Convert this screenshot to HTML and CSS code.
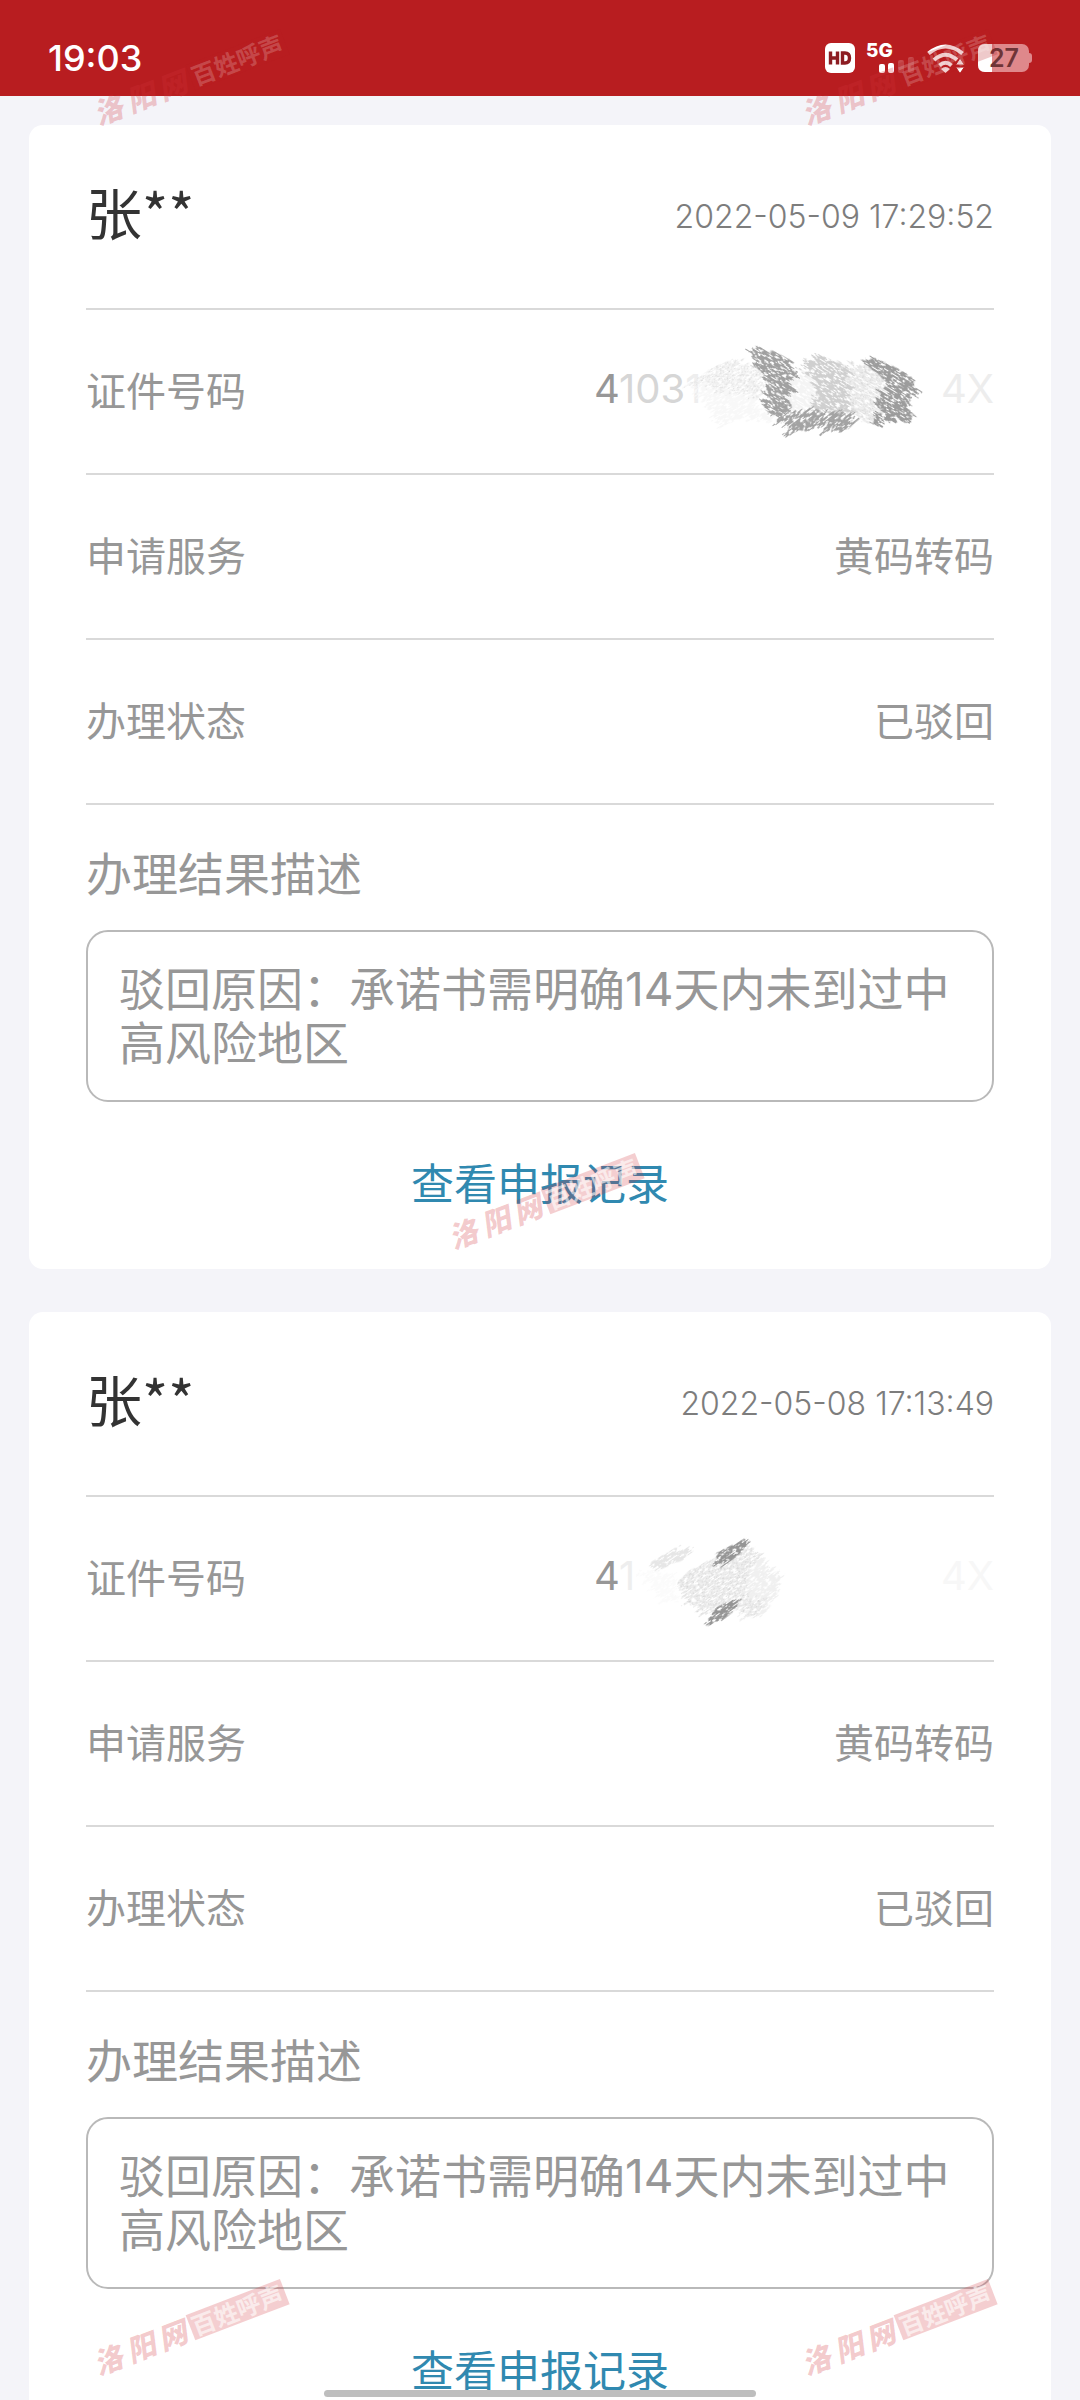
FILE: index.html
```html
<!DOCTYPE html>
<html lang="zh-CN">
<head>
<meta charset="utf-8">
<meta name="viewport" content="width=device-width, initial-scale=1">
<title>申报记录</title>
<link rel="stylesheet" href="styles.css">
</head>
<body>
<svg class="defs" width="0" height="0" aria-hidden="true">
  <defs>
    <pattern id="specks" width="17" height="13" patternUnits="userSpaceOnUse" patternTransform="rotate(-35)">
      <path d="M1 2h5M9 5h4M3 10h3M13 11h3" stroke="#b4b4b4" stroke-width="2"/>
    </pattern>
    <filter id="brush" x="-10%" y="-10%" width="120%" height="120%" color-interpolation-filters="sRGB">
      <feTurbulence type="fractalNoise" baseFrequency="0.008 0.11" numOctaves="2" seed="4"/>
      <feColorMatrix values="1 0 0 0 0  0 0 0 0 .5  0 0 0 0 .5  0 0 0 0 1" result="shift"/>
      <feDisplacementMap in="SourceGraphic" in2="shift" scale="90" xChannelSelector="R" yChannelSelector="G" result="torn"/>
      <feTurbulence type="fractalNoise" baseFrequency="0.06 0.22" numOctaves="2" seed="9"/>
      <feColorMatrix values="0 0 0 0 0  0 0 0 0 0  0 0 0 0 0  -9 0 0 0 5.800" result="holes"/>
      <feComposite in="torn" in2="holes" operator="in"/>
    </filter>
    <symbol id="mark" viewBox="0 0 220 40">
      <g class="mark-script"><text x="12" y="31">洛</text><text x="47" y="31">阳</text><text x="81" y="31">网</text></g>
      <rect class="mark-box" x="115" y="6" width="101" height="27"/>
      <text class="mark-text" x="117" y="29">百姓呼声</text>
    </symbol>
  </defs>
</svg>
<div class="screen">
  <header class="status">
    <time class="clock">19:03</time>
    <div class="icons">
      <svg class="hd" width="30" height="30" viewBox="0 0 30 30" role="img" aria-label="HD"><rect width="30" height="30" rx="6" fill="#fff"/><path d="M5.500 8.500v13M12.500 8.500v13M5.500 15h7" fill="none" stroke="#8c1c22" stroke-width="3.400"/><path d="M17.500 10v10h2.500q4.500 0 4.500-5t-4.500-5z" fill="none" stroke="#8c1c22" stroke-width="3.400"/></svg>
      <svg class="signal" width="50" height="42" viewBox="0 -6 50 42"><text x="0" y="14">5G</text><rect x="13" y="21" width="6" height="9" rx="2" fill="#fff"/><rect x="22" y="20" width="6" height="10" rx="2" fill="#fff"/><g fill="#fff" opacity=".2"><rect x="32" y="17" width="6" height="13" rx="2"/><rect x="42" y="14" width="6" height="16" rx="2"/></g></svg>
      <svg class="wifi" width="40" height="30" viewBox="0 0 40 30"><g fill="none" stroke="#fff" stroke-width="4"><path d="M2.500 10.500Q19.500-3.500 36.500 10.500"/><path d="M8 17Q19.500 6.500 31 17"/><path d="M13.500 22.500Q19.500 17 25.500 22.500"/></g><path d="M15 26q4.500-4 9 0l-4.500 4z" fill="#fff"/><path d="M29.500 22l4.500-7 4.500 7zM29.500 24h9L34 30.500z" fill="#fff" stroke="#b81d20" stroke-width="1"/></svg>
      <svg class="battery" width="54" height="28" viewBox="0 0 54 28"><rect width="51" height="28" rx="7" fill="#df888b"/><path d="M51 9q3 0 3 3v4q0 3-3 3z" fill="#df888b"/><path d="M14 0v28H7q-7 0-7-7V7q0-7 7-7z" fill="#fff"/><text x="11" y="23">27</text></svg>
    </div>
  </header>
  <main class="list">
    <article class="card">
      <header class="head"><h2>张**</h2><time>2022-05-09 17:29:52</time></header>
      <dl class="rows">
        <div class="row"><dt>证件号码</dt><dd class="id"><span>4<span class="faded">103</span><span class="faint">1</span></span><span class="pale">4X</span>
          <svg class="smudge" viewBox="102 0 1200 420" aria-hidden="true">
            <g transform="rotate(-30)" filter="url(#brush)"><g transform="rotate(30)">
              <path d="M385 190L450 145L525 112L560 130L610 150L620 215L590 240L650 310L550 290L480 320L430 240Z" fill="#f8f8f8"/>
              <path d="M385 190L450 145L525 112L610 150L620 215L590 235L520 215L440 200Z" fill="url(#specks)"/>
            </g></g>
            <g transform="rotate(32)" filter="url(#brush)"><g transform="rotate(-32)">
              <path d="M745 110L775 97L860 135L900 180L890 270L850 285L760 275L755 210L720 165Z" fill="#cfcfcf"/>
              <path d="M690 170L750 150L765 210L755 260L700 275L680 245Z" fill="#f4f4f4"/>
              <path d="M870 125L920 130L975 165L970 220L950 290L900 300L865 250Z" fill="#f0f0f0"/>
              <path d="M870 125L920 130L975 165L970 220L950 290L900 300L865 250Z" fill="url(#specks)"/>
              <path d="M585 78L640 90L690 115L705 150L695 190L680 240L690 270L640 285L610 262L600 235L620 205L610 155L575 135Z" fill="#a0a0a0"/>
              <path d="M900 105L950 115L980 125L1060 170L1070 220L1050 240L1040 300L980 305L940 310L915 295L955 280L960 225L975 180L940 150Z" fill="#9c9c9c"/>
            </g></g>
            <g transform="rotate(-38)" filter="url(#brush)"><g transform="rotate(38)">
              <path d="M640 265L690 265L740 280L790 265L850 275L895 295L850 335L760 325L700 335L660 300Z" fill="#a3a3a3"/>
            </g></g>
          </svg></dd></div>
        <div class="row"><dt>申请服务</dt><dd>黄码转码</dd></div>
        <div class="row"><dt>办理状态</dt><dd>已驳回</dd></div>
      </dl>
      <section class="result">
        <h3>办理结果描述</h3>
        <p>驳回原因：承诺书需明确14天内未到过中高风险地区</p>
      </section>
      <a class="more" href="#records">查看申报记录</a>
    </article>
    <article class="card">
      <header class="head"><h2>张**</h2><time>2022-05-08 17:13:49</time></header>
      <dl class="rows">
        <div class="row"><dt>证件号码</dt><dd class="id"><span>4<span class="faint">1</span></span><span class="ghost">4X</span>
          <svg class="smudge" viewBox="102 21 1200 420" aria-hidden="true">
            <g transform="rotate(-35)" filter="url(#brush)"><g transform="rotate(35)">
              <path d="M270 185L340 145L400 140L395 160L290 212Z" fill="#e6e6e6"/>
              <path d="M240 205L290 212L350 215L350 310L280 290Z" fill="#fbfbfb"/>
              <path d="M358 240L400 200L480 165L560 130L605 165L660 220L650 290L600 350L550 350L520 310L450 345L412 325L365 290Z" fill="#f0f0f0"/>
              <path d="M358 240L400 200L480 165L560 130L605 165L560 215L560 290L630 300L585 350L540 330L520 290L450 345L412 325L365 290Z" fill="url(#specks)"/>
              <path d="M470 155L545 118L562 125L545 155L500 190L480 195L466 185Z" fill="#959595"/>
              <path d="M432 378L455 330L530 290L530 325L485 360L468 360Z" fill="#959595"/>
            </g></g>
          </svg></dd></div>
        <div class="row"><dt>申请服务</dt><dd>黄码转码</dd></div>
        <div class="row"><dt>办理状态</dt><dd>已驳回</dd></div>
      </dl>
      <section class="result">
        <h3>办理结果描述</h3>
        <p>驳回原因：承诺书需明确14天内未到过中高风险地区</p>
      </section>
      <a class="more" href="#records">查看申报记录</a>
    </article>
  </main>
  <svg class="mark top start"><use href="#mark"/></svg>
  <svg class="mark top end"><use href="#mark"/></svg>
  <svg class="mark middle"><use href="#mark"/></svg>
  <svg class="mark bottom start"><use href="#mark"/></svg>
  <svg class="mark bottom end"><use href="#mark"/></svg>
  <div class="home-bar"></div>
</div>
</body>
</html>
```
FILE: styles.css
```css
* { box-sizing: border-box; }

body {
  margin: 0;
  background: #f4f4f9;
  color: #979797;
  font-family: Inter, "Noto Sans CJK SC", sans-serif;
  font-size: 40px;
}

h2, h3, p, dl, dd { margin: 0; font-weight: 400; }

.defs { position: absolute; }

.screen {
  position: relative;
  display: flex;
  flex-direction: column;
  height: 100vh;
  overflow: hidden;
}

/* status bar */
.status {
  flex: none;
  display: flex;
  align-items: center;
  justify-content: space-between;
  height: 96px;
  padding: 20px 48px 0;
  background: #b81d20;
  color: #fff;
}
.clock { font-size: 36px; font-weight: 500; }
.icons { display: flex; align-items: center; }
.signal { margin-left: 11px; fill: #fff; font-size: 19px; font-weight: 800; }
.wifi { margin: 0 12px 0 10px; }
.battery { fill: #6e3437; font-size: 25px; font-weight: 600; }

/* record cards */
.list {
  flex: none;
  display: flex;
  flex-direction: column;
  gap: 43px;
  padding: 29px;
}
.card {
  display: flex;
  flex-direction: column;
  padding: 0 57px 56px;
  border-radius: 14px;
  background: #fff;
}
.head {
  display: flex;
  align-items: center;
  justify-content: space-between;
  height: 185px;
  border-bottom: 2px solid #d9d9d9;
}
.head h2 {
  padding-bottom: 12px;
  color: #333;
  font-family: "Noto Sans CJK SC", sans-serif;
  font-size: 56px;
}
.head time { font-size: 32px; font-weight: 300; color: #7d7d7d; }
.row {
  display: flex;
  align-items: center;
  justify-content: space-between;
  height: 165px;
  padding-bottom: 6px;
  border-bottom: 2px solid #d9d9d9;
}
.id {
  position: relative;
  display: flex;
  justify-content: space-between;
  width: 400px;
}
.faded { color: #d6d6d6; }
.pale { color: #ededed; }
.faint { color: #eee; }
.ghost { color: #f7f7f7; }
.smudge {
  position: absolute;
  left: 0;
  top: 50%;
  width: 400px;
  height: 140px;
  margin-top: -68px;
}
.result h3 {
  padding: 39px 0 26px;
  font-size: 46px;
  line-height: 60px;
}
.result p {
  padding: 30px 31px;
  border: 2px solid #b9b9b9;
  border-radius: 22px;
  font-size: 46px;
  line-height: 54px;
}
.more {
  align-self: center;
  margin-top: 53px;
  color: #3089b0;
  font-size: 43px;
  line-height: 58px;
  text-decoration: none;
}

/* watermarks laid over the page */
.mark {
  position: absolute;
  width: 220px;
  height: 40px;
  transform: rotate(-21deg);
  pointer-events: none;
}
.mark.start { left: 76px; }
.mark.end { right: 76px; }
.mark.middle { left: calc(50% - 109px); top: 1184px; }
.mark.top {
  top: 60px;
  --box: #b81d20;
  --box-text: .2;
}
.mark.bottom { bottom: 50px; }
.mark-script {
  fill: #d2323a;
  fill-opacity: .26;
  font-family: "Noto Sans CJK SC", sans-serif;
  font-size: 29px;
  font-style: italic;
  font-weight: 900;
}
.mark-box { fill: var(--box, #d2323a); fill-opacity: .24; }
.mark-text {
  fill: #fff;
  fill-opacity: var(--box-text, .6);
  font-family: "Noto Sans CJK SC", sans-serif;
  font-size: 24px;
  font-weight: 700;
}

.home-bar {
  position: absolute;
  left: 30%;
  right: 30%;
  bottom: 3px;
  height: 7px;
  border-radius: 4px;
  background: #bebebe;
}
```
